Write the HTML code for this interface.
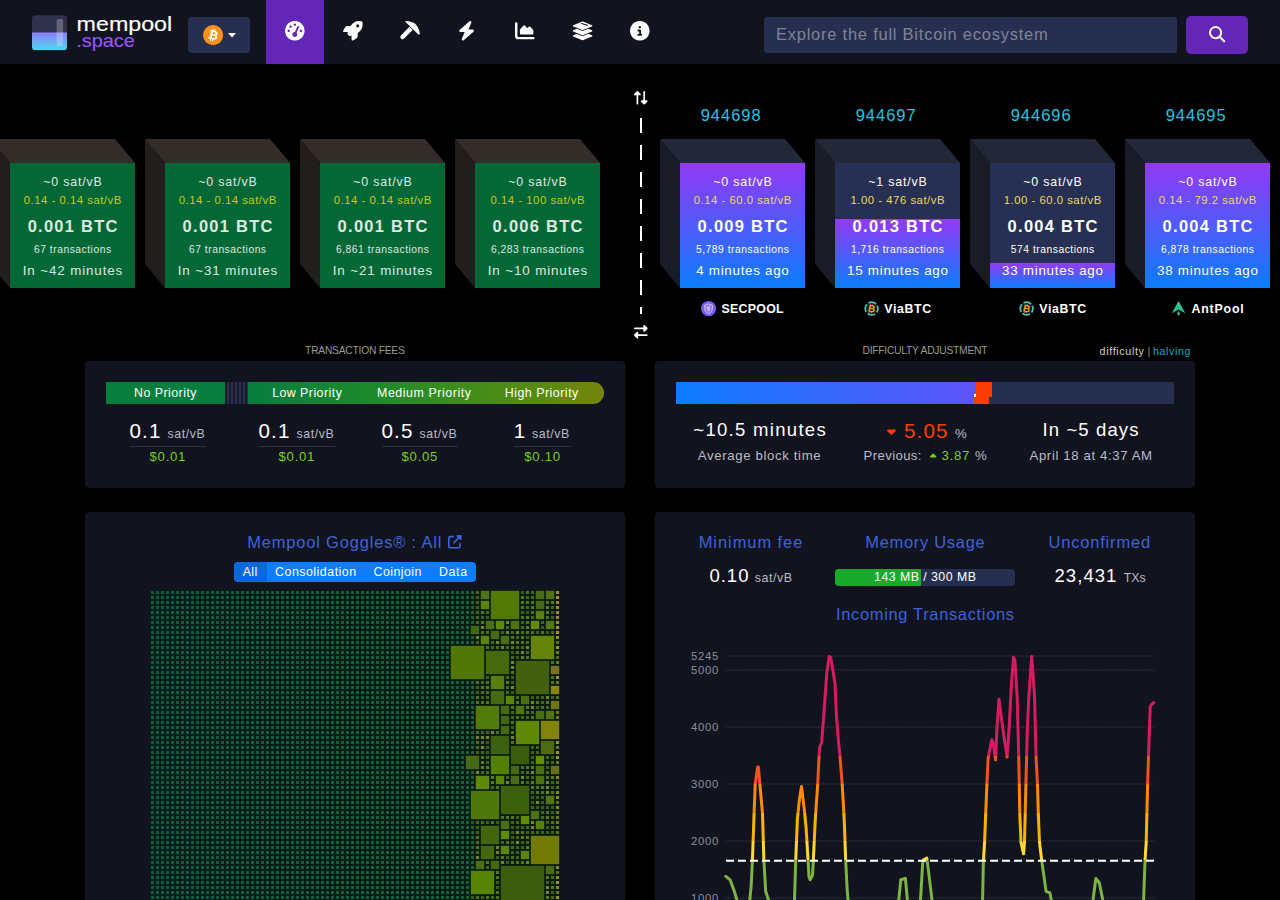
<!DOCTYPE html>
<html lang="en"><head><meta charset="utf-8"><title>mempool - Bitcoin Explorer</title>
<style>
html,body{margin:0;padding:0;background:#000}
body{width:1280px;height:900px;position:relative;overflow:hidden;font-family:"Liberation Sans", sans-serif;color:#fff;font-variant-ligatures:none}
.t{position:absolute;white-space:nowrap;display:block}
.i{position:absolute;display:block;overflow:visible}
.abs,.box,nav,section,header,main,ul,li,a,button,form{position:absolute;display:block;margin:0;padding:0;border:0;list-style:none;box-sizing:border-box}
nav{left:0;top:0;width:1280px;height:64px;background:#11131f}
.box{background:#11131f;border-radius:4px}
.blk{position:absolute;width:125px;height:125px;top:163px}
.blk::after{content:"";position:absolute;width:125px;height:24px;top:-24px;left:-20px;transform:skew(40deg);transform-origin:top}
.blk::before{content:"";position:absolute;width:20px;height:125px;top:-12px;left:-20px;transform:skewY(50deg);transform-origin:top}
.mp{background:#036835}
.mp::after{background:#342c29}
.mp::before{background:#221e1c}
.mb::after{background:#232838}
.mb::before{background:#191c27}
</style></head><body>

<nav>
<svg class="i" style="left:32px;top:15px" width="142" height="37" viewBox="0 0 142 37">
<defs><linearGradient id="lg" x1="0" y1="0" x2="0" y2="1"><stop offset="0" stop-color="#8f7df7"/><stop offset="1" stop-color="#48d9f0"/></linearGradient>
<clipPath id="lc"><rect x="0" y="0.25" width="35" height="35" rx="3.5"/></clipPath></defs>
<g clip-path="url(#lc)"><rect x="0" y="0" width="35" height="17.5" fill="#2e3149"/><rect x="0" y="17.4" width="35" height="18" fill="url(#lg)"/></g>
<rect x="24.6" y="4" width="6.5" height="27.2" rx="1.5" fill="#fff" fill-opacity="0.25"/>
<text x="44.6" y="15.6" font-size="20.4" fill="#fff" textLength="95.6" lengthAdjust="spacingAndGlyphs" stroke="#fff" stroke-width="0.15">mempool</text>
<text x="44.2" y="31.7" font-size="18.5" fill="#9a54f6" textLength="58.6" lengthAdjust="spacingAndGlyphs" stroke="#9a54f6" stroke-width="0.15">.space</text>
</svg>
<button style="left:188px;top:17px;width:62px;height:36px;background:#272f50;border-radius:4px"></button>
<svg class="i" style="left:202.6px;top:24.5px" width="20.2" height="20.2" viewBox="0 0 64 64"><circle cx="32" cy="32" r="32" fill="#f7931a"/>
<path fill="#fff" d="M46.1 27.4c.6-4.3-2.6-6.5-7-8l1.400-5.800-3.500-.9-1.400 5.600c-.9-.2-1.900-.4-2.800-.7l1.400-5.700-3.500-.9-1.400 5.800c-.8-.2-1.500-.3-2.200-.5l-4.800-1.200-.9 3.700s2.600.6 2.500.6c1.400.4 1.700 1.300 1.600 2l-1.600 6.600c.1 0 .2.100.4.100l-.4-.1-2.300 9.200c-.2.400-.6 1.100-1.600.8 0 .1-2.500-.6-2.500-.6l-1.700 4 4.600 1.100c.8.200 1.700.4 2.500.7l-1.400 5.800 3.500.9 1.400-5.800c1 .3 1.900.5 2.800.7l-1.400 5.700 3.500.9 1.400-5.800c6 1.100 10.500.7 12.400-4.700 1.500-4.400-.1-6.900-3.200-8.500 2.300-.5 4-2 4.500-5.100zm-8 11.200c-1.100 4.400-8.400 2-10.800 1.400l1.900-7.700c2.400.6 10 1.800 8.900 6.300zm1.100-11.300c-1 4-7.100 2-9.100 1.500l1.700-7c2 .5 8.400 1.400 7.400 5.500z"/></svg>
<svg class="i" style="left:228px;top:32.6px" width="8" height="4.4" viewBox="0 0 8 4.4"><path d="M0 0H8L4 4.4Z" fill="#fff"/></svg>
<ul style="left:266px;top:0;width:406px;height:64px">
<li style="left:0;top:0;width:58px;height:64px;background:#6326b6"></li>
</ul>
<svg class="i" style="left:285.00px;top:20.70px;" width="19.60" height="19.60" viewBox="0 0 512 512"><path fill="#fff" d="M0 256Q1 186 34 128Q68 70 128 34Q189 0 256 0Q323 0 384 34Q444 70 478 128Q511 186 512 256Q511 326 478 384Q444 442 384 478Q323 512 256 512Q189 512 128 478Q68 442 34 384Q1 326 0 256ZM288 96Q288 82 279 73Q270 64 256 64Q242 64 233 73Q224 82 224 96Q224 110 233 119Q242 128 256 128Q270 128 279 119Q288 110 288 96ZM256 416Q283 415 301 397Q319 379 320 352Q319 325 302 307L366 162Q373 141 354 130Q333 123 322 142L258 288Q257 288 257 288Q256 288 256 288Q229 289 211 307Q193 325 192 352Q193 379 211 397Q229 415 256 416ZM176 144Q176 130 167 121Q158 112 144 112Q130 112 121 121Q112 130 112 144Q112 158 121 167Q130 176 144 176Q158 176 167 167Q176 158 176 144ZM96 288Q110 288 119 279Q128 270 128 256Q128 242 119 233Q110 224 96 224Q82 224 73 233Q64 242 64 256Q64 270 73 279Q82 288 96 288ZM448 256Q448 242 439 233Q430 224 416 224Q402 224 393 233Q384 242 384 256Q384 270 393 279Q402 288 416 288Q430 288 439 279Q448 270 448 256Z"/></svg>
<svg class="i" style="left:343.10px;top:20.70px;" width="19.60" height="19.60" viewBox="0 0 512 512"><path fill="#fff" d="M157 385 126 354 157 385 126 354Q113 340 118 322Q123 308 130 288H24Q10 288 3 276Q-3 264 3 252L56 163Q77 129 118 128H200Q204 122 207 117Q249 57 299 31Q349 5 398 1Q447 -2 484 5Q502 10 507 28Q514 65 511 114Q507 163 481 213Q455 263 395 305Q390 308 384 312V394Q383 435 349 456L260 509Q248 515 236 509Q224 502 224 488V381Q203 388 188 393Q170 398 157 385ZM384 168Q407 167 419 148Q429 128 419 108Q407 89 384 88Q361 89 349 108Q339 128 349 148Q361 167 384 168Z"/></svg>
<svg class="i" style="left:396px;top:16px" width="28" height="28" viewBox="396 16 28 28"><path d="M402.500 37L411.800 27.700" stroke="#fff" stroke-width="4.500" stroke-linecap="round" fill="none"/><path d="M405.500 20.900C409.800 21.200 412.600 22.100 414.500 23.200C416.500 24.700 418.200 27.200 419 29.900C419.500 31.500 419.800 33 419.900 34.300L418.400 34.600L405.300 21.700Z" fill="#fff" stroke="#11131f" stroke-width="1.200" paint-order="stroke" stroke-linejoin="round"/></svg>
<svg class="i" style="left:458.03px;top:20.70px;" width="17.15" height="19.60" viewBox="0 0 448 512"><path fill="#fff" d="M349 45Q358 22 339 6Q318 -7 299 8L43 232Q27 247 34 267Q43 287 64 288H176L99 467Q90 490 109 506Q130 519 149 504L405 280Q421 265 414 245Q406 225 384 224H273L349 45Z"/></svg>
<svg class="i" style="left:514.70px;top:20.70px;" width="19.60" height="19.60" viewBox="0 0 512 512"><path fill="#fff" d="M64 64Q64 50 55 41Q46 32 32 32Q18 32 9 41Q0 50 0 64V400Q1 434 23 457Q46 479 80 480H480Q494 480 503 471Q512 462 512 448Q512 434 503 425Q494 416 480 416H80Q65 415 64 400V64ZM160 352H448H160H448Q462 352 471 343Q480 334 480 320V252Q480 240 472 231L407 154Q397 144 383 143Q370 143 360 152L339 173Q331 181 321 180Q310 180 303 172L264 125Q254 113 240 113Q226 113 215 124L136 215Q128 224 128 236V320Q128 334 137 343Q146 352 160 352Z"/></svg>
<svg class="i" style="left:570px;top:18px" width="26" height="26" viewBox="570 18 26 26"><path d="M573.5 35.9L582.6 32.2L591.7 35.9L582.6 39.6Z" fill="#11131f" stroke="#11131f" stroke-width="2.900" stroke-linejoin="round"/><path d="M573.5 35.9L582.6 32.2L591.7 35.9L582.6 39.6Z" fill="#fff" stroke="#fff" stroke-width="1.300" stroke-linejoin="round"/><path d="M573.5 30.9L582.6 27.2L591.7 30.9L582.6 34.6Z" fill="#11131f" stroke="#11131f" stroke-width="2.900" stroke-linejoin="round"/><path d="M573.5 30.9L582.6 27.2L591.7 30.9L582.6 34.6Z" fill="#fff" stroke="#fff" stroke-width="1.300" stroke-linejoin="round"/><path d="M573.5 25.8L582.6 22.1L591.7 25.8L582.6 29.5Z" fill="#11131f" stroke="#11131f" stroke-width="2.900" stroke-linejoin="round"/><path d="M573.5 25.8L582.6 22.1L591.7 25.8L582.6 29.5Z" fill="#fff" stroke="#fff" stroke-width="1.300" stroke-linejoin="round"/><path d="M581.600 23.500L587.500 25.300" stroke="#11131f" stroke-width="1.100" stroke-linecap="round"/></svg>
<svg class="i" style="left:630.00px;top:20.70px;" width="19.60" height="19.60" viewBox="0 0 512 512"><path fill="#fff" d="M256 512Q326 511 384 478Q442 444 478 384Q512 323 512 256Q512 189 478 128Q442 68 384 34Q326 1 256 0Q186 1 128 34Q70 68 34 128Q0 189 0 256Q0 323 34 384Q70 444 128 478Q186 511 256 512ZM216 336H240H216H240V272H216Q194 270 192 248Q194 226 216 224H264Q286 226 288 248V336H296Q318 338 320 360Q318 382 296 384H216Q194 382 192 360Q194 338 216 336ZM256 128Q270 128 279 137Q288 146 288 160Q288 174 279 183Q270 192 256 192Q242 192 233 183Q224 174 224 160Q224 146 233 137Q242 128 256 128Z"/></svg>
<form style="left:764px;top:17px;width:413px;height:36px;background:#272f50;border-radius:3px"></form>
<span class="t" style="font-size:16.48px;line-height:21px;top:23.60px;color:#7f8394;letter-spacing:0.771px;left:776.00px;">Explore the full Bitcoin ecosystem</span>
<button style="left:1186px;top:16px;width:62px;height:38px;background:#6326b6;border-radius:5px"></button>
<svg class="i" style="left:1208.90px;top:25.70px;" width="16.20" height="16.20" viewBox="0 0 512 512"><path fill="#fff" d="M416 208Q415 278 376 331L503 457Q512 467 512 480Q512 493 503 503Q493 512 480 512Q467 512 457 503L331 376Q278 415 208 416Q120 414 61 355Q2 296 0 208Q2 120 61 61Q120 2 208 0Q296 2 355 61Q414 120 416 208ZM208 352Q247 352 280 333Q313 314 333 280Q352 246 352 208Q352 170 333 136Q313 102 280 83Q247 64 208 64Q169 64 136 83Q103 102 83 136Q64 170 64 208Q64 246 83 280Q103 314 136 333Q169 352 208 352Z"/></svg>
</nav>
<section style="left:0;top:64px;width:1280px;height:280px">
</section>
<div class="blk mp" style="left:10px"></div>
<div class="t" style="font-size:12.36px;line-height:16px;top:173.52px;color:#dfe9e1;letter-spacing:0.814px;left:-127.09px;width:400px;text-align:center;"><span>~0 sat/vB</span></div><div class="t" style="font-size:11.33px;line-height:14px;top:193.18px;color:#c9c816;letter-spacing:0.511px;left:-127.24px;width:400px;text-align:center;"><span>0.14 - 0.14 sat/vB</span></div><div class="t" style="font-size:16.48px;line-height:21px;top:216.00px;color:#dfe9e1;font-weight:700;letter-spacing:1.266px;left:-126.87px;width:400px;text-align:center;"><span>0.001 BTC</span></div><div class="t" style="font-size:10.30px;line-height:13px;top:242.84px;color:#dfe9e1;letter-spacing:0.518px;left:-127.24px;width:400px;text-align:center;"><span>67 transactions</span></div><div class="t" style="font-size:13.39px;line-height:17px;top:262.07px;color:#dfe9e1;letter-spacing:0.878px;left:-127.06px;width:400px;text-align:center;"><span>In ~42 minutes</span></div>
<div class="blk mp" style="left:165px"></div>
<div class="t" style="font-size:12.36px;line-height:16px;top:173.52px;color:#dfe9e1;letter-spacing:0.814px;left:27.91px;width:400px;text-align:center;"><span>~0 sat/vB</span></div><div class="t" style="font-size:11.33px;line-height:14px;top:193.18px;color:#c9c816;letter-spacing:0.511px;left:27.76px;width:400px;text-align:center;"><span>0.14 - 0.14 sat/vB</span></div><div class="t" style="font-size:16.48px;line-height:21px;top:216.00px;color:#dfe9e1;font-weight:700;letter-spacing:1.266px;left:28.13px;width:400px;text-align:center;"><span>0.001 BTC</span></div><div class="t" style="font-size:10.30px;line-height:13px;top:242.84px;color:#dfe9e1;letter-spacing:0.518px;left:27.76px;width:400px;text-align:center;"><span>67 transactions</span></div><div class="t" style="font-size:13.39px;line-height:17px;top:262.07px;color:#dfe9e1;letter-spacing:0.878px;left:27.94px;width:400px;text-align:center;"><span>In ~31 minutes</span></div>
<div class="blk mp" style="left:320px"></div>
<div class="t" style="font-size:12.36px;line-height:16px;top:173.52px;color:#dfe9e1;letter-spacing:0.814px;left:182.91px;width:400px;text-align:center;"><span>~0 sat/vB</span></div><div class="t" style="font-size:11.33px;line-height:14px;top:193.18px;color:#c9c816;letter-spacing:0.511px;left:182.76px;width:400px;text-align:center;"><span>0.14 - 0.14 sat/vB</span></div><div class="t" style="font-size:16.48px;line-height:21px;top:216.00px;color:#dfe9e1;font-weight:700;letter-spacing:1.266px;left:183.13px;width:400px;text-align:center;"><span>0.001 BTC</span></div><div class="t" style="font-size:10.30px;line-height:13px;top:242.84px;color:#dfe9e1;letter-spacing:0.520px;left:182.76px;width:400px;text-align:center;"><span>6,861 transactions</span></div><div class="t" style="font-size:13.39px;line-height:17px;top:262.07px;color:#dfe9e1;letter-spacing:0.878px;left:182.94px;width:400px;text-align:center;"><span>In ~21 minutes</span></div>
<div class="blk mp" style="left:475px"></div>
<div class="t" style="font-size:12.36px;line-height:16px;top:173.52px;color:#dfe9e1;letter-spacing:0.814px;left:337.91px;width:400px;text-align:center;"><span>~0 sat/vB</span></div><div class="t" style="font-size:11.33px;line-height:14px;top:193.18px;color:#c9c816;letter-spacing:0.520px;left:337.76px;width:400px;text-align:center;"><span>0.14 - 100 sat/vB</span></div><div class="t" style="font-size:16.48px;line-height:21px;top:216.00px;color:#dfe9e1;font-weight:700;letter-spacing:1.266px;left:338.13px;width:400px;text-align:center;"><span>0.006 BTC</span></div><div class="t" style="font-size:10.30px;line-height:13px;top:242.84px;color:#dfe9e1;letter-spacing:0.520px;left:337.76px;width:400px;text-align:center;"><span>6,283 transactions</span></div><div class="t" style="font-size:13.39px;line-height:17px;top:262.07px;color:#dfe9e1;letter-spacing:0.878px;left:337.94px;width:400px;text-align:center;"><span>In ~10 minutes</span></div>
<div class="abs" style="left:640px;top:117.5px;width:2px;height:196px;background:repeating-linear-gradient(to bottom,#fff 0,#fff 15px,transparent 15px,transparent 27px)"></div>
<svg class="i" style="left:634.40px;top:90.80px;" width="13.60" height="13.60" viewBox="0 0 512 512"><path fill="#fff" d="M32 96H352H32H352V32Q353 11 372 2Q391 -5 407 9L503 105Q512 115 512 128Q512 141 503 151L407 247Q391 261 372 253Q353 245 352 224V160H32Q18 160 9 151Q0 142 0 128Q0 114 9 105Q18 96 32 96ZM480 352Q494 352 503 361Q512 370 512 384Q512 398 503 407Q494 416 480 416H160V480Q159 501 140 510Q121 517 105 503L9 407Q0 397 0 384Q0 371 9 362L105 266Q121 251 140 259Q159 267 160 288V352H480Z" transform="rotate(90 256 256)"/></svg>
<svg class="i" style="left:634.40px;top:324.80px;" width="13.60" height="13.60" viewBox="0 0 512 512"><path fill="#fff" d="M32 96H352H32H352V32Q353 11 372 2Q391 -5 407 9L503 105Q512 115 512 128Q512 141 503 151L407 247Q391 261 372 253Q353 245 352 224V160H32Q18 160 9 151Q0 142 0 128Q0 114 9 105Q18 96 32 96ZM480 352Q494 352 503 361Q512 370 512 384Q512 398 503 407Q494 416 480 416H160V480Q159 501 140 510Q121 517 105 503L9 407Q0 397 0 384Q0 371 9 362L105 266Q121 251 140 259Q159 267 160 288V352H480Z"/></svg>
<div class="blk mb" style="left:680px;background:linear-gradient(to bottom,#272f52 0,#272f52 0%,#9339f4 0%,#0c7cff 100%)"></div>
<div class="t" style="font-size:16.48px;line-height:21px;top:104.90px;color:#1fc4e6;letter-spacing:1.018px;left:531.21px;width:400px;text-align:center;"><span>944698</span></div>
<div class="t" style="font-size:12.36px;line-height:16px;top:173.52px;color:#fff;letter-spacing:0.814px;left:542.91px;width:400px;text-align:center;"><span>~0 sat/vB</span></div><div class="t" style="font-size:11.33px;line-height:14px;top:193.18px;color:#eadb5c;letter-spacing:0.511px;left:542.76px;width:400px;text-align:center;"><span>0.14 - 60.0 sat/vB</span></div><div class="t" style="font-size:16.48px;line-height:21px;top:216.00px;color:#fff;font-weight:700;letter-spacing:1.266px;left:543.13px;width:400px;text-align:center;"><span>0.009 BTC</span></div><div class="t" style="font-size:10.30px;line-height:13px;top:242.84px;color:#fff;letter-spacing:0.520px;left:542.76px;width:400px;text-align:center;"><span>5,789 transactions</span></div><div class="t" style="font-size:13.39px;line-height:17px;top:262.07px;color:#fff;letter-spacing:0.716px;left:542.86px;width:400px;text-align:center;"><span>4 minutes ago</span></div>
<div class="blk mb" style="left:835px;background:linear-gradient(to bottom,#272f52 0,#272f52 45%,#9339f4 45%,#0c7cff 100%)"></div>
<div class="t" style="font-size:16.48px;line-height:21px;top:104.90px;color:#1fc4e6;letter-spacing:1.018px;left:686.21px;width:400px;text-align:center;"><span>944697</span></div>
<div class="t" style="font-size:12.36px;line-height:16px;top:173.52px;color:#fff;letter-spacing:0.814px;left:697.91px;width:400px;text-align:center;"><span>~1 sat/vB</span></div><div class="t" style="font-size:11.33px;line-height:14px;top:193.18px;color:#eadb5c;letter-spacing:0.520px;left:697.76px;width:400px;text-align:center;"><span>1.00 - 476 sat/vB</span></div><div class="t" style="font-size:16.48px;line-height:21px;top:216.00px;color:#fff;font-weight:700;letter-spacing:1.266px;left:698.13px;width:400px;text-align:center;"><span>0.013 BTC</span></div><div class="t" style="font-size:10.30px;line-height:13px;top:242.84px;color:#fff;letter-spacing:0.520px;left:697.76px;width:400px;text-align:center;"><span>1,716 transactions</span></div><div class="t" style="font-size:13.39px;line-height:17px;top:262.07px;color:#fff;letter-spacing:0.724px;left:697.86px;width:400px;text-align:center;"><span>15 minutes ago</span></div>
<div class="blk mb" style="left:990px;background:linear-gradient(to bottom,#272f52 0,#272f52 80%,#9339f4 80%,#0c7cff 100%)"></div>
<div class="t" style="font-size:16.48px;line-height:21px;top:104.90px;color:#1fc4e6;letter-spacing:1.018px;left:841.21px;width:400px;text-align:center;"><span>944696</span></div>
<div class="t" style="font-size:12.36px;line-height:16px;top:173.52px;color:#fff;letter-spacing:0.814px;left:852.91px;width:400px;text-align:center;"><span>~0 sat/vB</span></div><div class="t" style="font-size:11.33px;line-height:14px;top:193.18px;color:#eadb5c;letter-spacing:0.511px;left:852.76px;width:400px;text-align:center;"><span>1.00 - 60.0 sat/vB</span></div><div class="t" style="font-size:16.48px;line-height:21px;top:216.00px;color:#fff;font-weight:700;letter-spacing:1.266px;left:853.13px;width:400px;text-align:center;"><span>0.004 BTC</span></div><div class="t" style="font-size:10.30px;line-height:13px;top:242.84px;color:#fff;letter-spacing:0.525px;left:852.76px;width:400px;text-align:center;"><span>574 transactions</span></div><div class="t" style="font-size:13.39px;line-height:17px;top:262.07px;color:#fff;letter-spacing:0.724px;left:852.86px;width:400px;text-align:center;"><span>33 minutes ago</span></div>
<div class="blk mb" style="left:1145px;background:linear-gradient(to bottom,#272f52 0,#272f52 0%,#9339f4 0%,#0c7cff 100%)"></div>
<div class="t" style="font-size:16.48px;line-height:21px;top:104.90px;color:#1fc4e6;letter-spacing:1.018px;left:996.21px;width:400px;text-align:center;"><span>944695</span></div>
<div class="t" style="font-size:12.36px;line-height:16px;top:173.52px;color:#fff;letter-spacing:0.814px;left:1007.91px;width:400px;text-align:center;"><span>~0 sat/vB</span></div><div class="t" style="font-size:11.33px;line-height:14px;top:193.18px;color:#eadb5c;letter-spacing:0.511px;left:1007.76px;width:400px;text-align:center;"><span>0.14 - 79.2 sat/vB</span></div><div class="t" style="font-size:16.48px;line-height:21px;top:216.00px;color:#fff;font-weight:700;letter-spacing:1.266px;left:1008.13px;width:400px;text-align:center;"><span>0.004 BTC</span></div><div class="t" style="font-size:10.30px;line-height:13px;top:242.84px;color:#fff;letter-spacing:0.520px;left:1007.76px;width:400px;text-align:center;"><span>6,878 transactions</span></div><div class="t" style="font-size:13.39px;line-height:17px;top:262.07px;color:#fff;letter-spacing:0.724px;left:1007.86px;width:400px;text-align:center;"><span>38 minutes ago</span></div>
<svg class="i" style="left:700.80px;top:300.8px" width="15.2" height="15.2" viewBox="0 0 15 15"><circle cx="7.5" cy="7.5" r="7.5" fill="#7b5bf2"/><path d="M7.500 2.700L11.300 4.100V7.600C11.300 10 9.700 11.700 7.500 12.600C5.300 11.700 3.700 10 3.700 7.600V4.100Z" fill="#8f74f6" stroke="#d6caff" stroke-width="0.900" stroke-linejoin="round"/><path d="M9 5.900H6.600Q6 5.900 6 6.600Q6 7.400 6.600 7.400H8.400Q9 7.400 9 8.200Q9 9 8.400 9H6" fill="none" stroke="#e4dcff" stroke-width="0.900"/></svg><span class="t" style="font-size:12.36px;line-height:16px;top:300.52px;color:#fff;font-weight:700;letter-spacing:0.295px;left:721.40px;">SECPOOL</span>
<svg class="i" style="left:863.80px;top:300.8px" width="15.2" height="15.2" viewBox="0 0 15 15"><circle cx="7.500" cy="7.500" r="6.300" fill="#0c1a1e" stroke="#4fc0b2" stroke-width="1.700" stroke-dasharray="8.100 1.800" stroke-dashoffset="4"/><text x="7.700" y="11" font-size="9.800" font-weight="700" text-anchor="middle" fill="#f2a01e" transform="rotate(12 7.500 7.500)">B</text><path d="M6.600 3.200V4.400M8.400 3.500V4.600M5.700 10.600V11.800M7.500 10.900V12.100" stroke="#f2a01e" stroke-width="0.800"/></svg><span class="t" style="font-size:12.36px;line-height:16px;top:300.52px;color:#fff;font-weight:700;letter-spacing:0.617px;left:884.30px;">ViaBTC</span>
<svg class="i" style="left:1018.80px;top:300.8px" width="15.2" height="15.2" viewBox="0 0 15 15"><circle cx="7.500" cy="7.500" r="6.300" fill="#0c1a1e" stroke="#4fc0b2" stroke-width="1.700" stroke-dasharray="8.100 1.800" stroke-dashoffset="4"/><text x="7.700" y="11" font-size="9.800" font-weight="700" text-anchor="middle" fill="#f2a01e" transform="rotate(12 7.500 7.500)">B</text><path d="M6.600 3.200V4.400M8.400 3.500V4.600M5.700 10.600V11.800M7.500 10.900V12.100" stroke="#f2a01e" stroke-width="0.800"/></svg><span class="t" style="font-size:12.36px;line-height:16px;top:300.52px;color:#fff;font-weight:700;letter-spacing:0.617px;left:1039.30px;">ViaBTC</span>
<svg class="i" style="left:1170.90px;top:300.8px" width="15.2" height="15.2" viewBox="0 0 15 15"><path d="M7.500 0L14.200 12L7.500 8.500L0.800 12Z" fill="#2fc18a"/><path d="M7.500 9.800L9 12.400L7.500 14.800L6 12.400Z" fill="#2fc18a"/></svg><span class="t" style="font-size:12.36px;line-height:16px;top:300.52px;color:#fff;font-weight:700;letter-spacing:0.799px;left:1191.50px;">AntPool</span>
<div class="t" style="font-size:10.30px;line-height:13px;top:343.94px;color:#999;letter-spacing:-0.255px;left:154.87px;width:400px;text-align:center;"><span>TRANSACTION FEES</span></div>
<section class="box" style="left:85px;top:361px;width:540px;height:127px">
<div class="abs" style="left:21px;top:21px;width:119px;height:22px;background:#077d3e"></div>
<div class="abs" style="left:140px;top:21px;width:23px;height:22px;background:repeating-linear-gradient(90deg,#181b2d 0,#181b2d 2px,#2a2f4a 2px,#2a2f4a 4px)"></div>
<div class="abs" style="left:162.5px;top:21px;width:356.5px;height:22px;border-radius:0 11px 11px 0;background:linear-gradient(90deg,#077d3e 0%,#1d8a2c 35%,#3e8d1a 60%,#5d8a0e 85%,#76840a 100%)"></div>
</section>
<div class="t" style="font-size:12.36px;line-height:16px;top:385.02px;color:#fff;letter-spacing:0.469px;left:-34.47px;width:400px;text-align:center;"><span>No Priority</span></div>
<div class="t" style="font-size:12.36px;line-height:16px;top:385.02px;color:#fff;letter-spacing:0.466px;left:107.23px;width:400px;text-align:center;"><span>Low Priority</span></div>
<div class="t" style="font-size:12.36px;line-height:16px;top:385.02px;color:#fff;letter-spacing:0.577px;left:224.29px;width:400px;text-align:center;"><span>Medium Priority</span></div>
<div class="t" style="font-size:12.36px;line-height:16px;top:385.02px;color:#fff;letter-spacing:0.523px;left:341.76px;width:400px;text-align:center;"><span>High Priority</span></div>
<span class="t" style="font-size:20.60px;line-height:26px;top:418.07px;color:#fff;letter-spacing:1.057px;left:129.60px;">0.1</span>
<span class="t" style="font-size:12.36px;line-height:16px;top:425.92px;color:#b9bcc8;letter-spacing:0.555px;left:167.60px;">sat/vB</span>
<div class="abs" style="left:129.5px;top:446px;width:76.0px;height:1px;background:#2c3044"></div>
<div class="t" style="font-size:13.18px;line-height:17px;top:447.94px;color:#75d11f;letter-spacing:0.734px;left:-32.13px;width:400px;text-align:center;"><span>$0.01</span></div>
<span class="t" style="font-size:20.60px;line-height:26px;top:418.07px;color:#fff;letter-spacing:1.057px;left:258.60px;">0.1</span>
<span class="t" style="font-size:12.36px;line-height:16px;top:425.92px;color:#b9bcc8;letter-spacing:0.555px;left:296.60px;">sat/vB</span>
<div class="abs" style="left:258.5px;top:446px;width:76.0px;height:1px;background:#2c3044"></div>
<div class="t" style="font-size:13.18px;line-height:17px;top:447.94px;color:#75d11f;letter-spacing:0.734px;left:96.87px;width:400px;text-align:center;"><span>$0.01</span></div>
<span class="t" style="font-size:20.60px;line-height:26px;top:418.07px;color:#fff;letter-spacing:1.057px;left:381.60px;">0.5</span>
<span class="t" style="font-size:12.36px;line-height:16px;top:425.92px;color:#b9bcc8;letter-spacing:0.555px;left:419.60px;">sat/vB</span>
<div class="abs" style="left:381.5px;top:446px;width:76.0px;height:1px;background:#2c3044"></div>
<div class="t" style="font-size:13.18px;line-height:17px;top:447.94px;color:#75d11f;letter-spacing:0.734px;left:219.87px;width:400px;text-align:center;"><span>$0.05</span></div>
<span class="t" style="font-size:20.60px;line-height:26px;top:418.07px;color:#fff;letter-spacing:1.266px;left:513.80px;">1</span>
<span class="t" style="font-size:12.36px;line-height:16px;top:425.92px;color:#b9bcc8;letter-spacing:0.555px;left:532.00px;">sat/vB</span>
<div class="abs" style="left:513.5px;top:446px;width:57.5px;height:1px;background:#2c3044"></div>
<div class="t" style="font-size:13.18px;line-height:17px;top:447.94px;color:#75d11f;letter-spacing:0.734px;left:342.62px;width:400px;text-align:center;"><span>$0.10</span></div>
<div class="t" style="font-size:10.30px;line-height:13px;top:343.94px;color:#999;letter-spacing:-0.251px;left:724.87px;width:400px;text-align:center;"><span>DIFFICULTY ADJUSTMENT</span></div>
<span class="t" style="font-size:10.71px;line-height:14px;top:344.29px;color:#d0d0d0;letter-spacing:0.645px;left:1099.60px;">difficulty</span>
<span class="t" style="font-size:10.71px;line-height:14px;top:344.29px;color:#8a8a8a;letter-spacing:0.734px;left:1147.60px;">|</span>
<span class="t" style="font-size:10.71px;line-height:14px;top:344.29px;color:#1ba5c6;letter-spacing:0.592px;left:1153.00px;">halving</span>
<section class="box" style="left:655px;top:361px;width:540px;height:127px">
<div class="abs" style="left:21px;top:21px;width:498px;height:22px;background:#272f50"></div>
<div class="abs" style="left:21px;top:21px;width:300px;height:22px;background:linear-gradient(90deg,#0c7cff 0,#9339f4 498px)"></div>
<div class="abs" style="left:321px;top:21px;width:16px;height:15px;background:#ff3d00"></div>
<div class="abs" style="left:319px;top:35px;width:15px;height:8px;background:#ff3d00"></div>
<div class="abs" style="left:319px;top:32.800px;width:2px;height:3px;background:#fff"></div>
</section>
<div class="t" style="font-size:18.54px;line-height:23px;top:418.39px;color:#fff;letter-spacing:1.293px;left:560.15px;width:400px;text-align:center;"><span>~10.5 minutes</span></div>
<div class="t" style="font-size:13.18px;line-height:17px;top:446.64px;color:#b9bcc8;letter-spacing:0.655px;left:559.53px;width:400px;text-align:center;"><span>Average block time</span></div>
<div class="t" style="font-size:18.54px;line-height:23px;top:418.39px;color:#fff;letter-spacing:1.116px;left:891.06px;width:400px;text-align:center;"><span>In ~5 days</span></div>
<div class="t" style="font-size:13.18px;line-height:17px;top:446.64px;color:#b9bcc8;letter-spacing:0.627px;left:891.11px;width:400px;text-align:center;"><span>April 18 at 4:37 AM</span></div>
<svg class="i" style="left:887.00px;top:424.00px;" width="9.00" height="14.40" viewBox="0 0 320 512"><path fill="#ff3d00" d="M137 375Q147 384 160 384Q173 384 183 375L311 247Q325 231 318 212Q309 193 288 192H32Q11 193 2 212Q-5 231 9 247L137 375Z"/></svg>
<span class="t" style="font-size:20.60px;line-height:26px;top:417.87px;color:#ff3d00;letter-spacing:1.109px;left:904.00px;">5.05</span>
<span class="t" style="font-size:13.18px;line-height:17px;top:424.94px;color:#b9bcc8;letter-spacing:0.453px;left:955.00px;">%</span>
<span class="t" style="font-size:13.18px;line-height:17px;top:446.64px;color:#b9bcc8;letter-spacing:0.387px;left:863.50px;">Previous:</span>
<svg class="i" style="left:930.08px;top:451.45px;" width="6.44" height="10.30" viewBox="0 0 320 512"><path fill="#75d11f" d="M183 137Q173 128 160 128Q147 128 137 137L9 265Q-5 281 2 300Q11 319 32 320H288Q309 319 318 300Q325 281 311 265L183 137Z"/></svg>
<span class="t" style="font-size:13.18px;line-height:17px;top:446.64px;color:#75d11f;letter-spacing:0.715px;left:941.50px;">3.87</span>
<span class="t" style="font-size:13.18px;line-height:17px;top:446.64px;color:#b9bcc8;letter-spacing:0.453px;left:975.00px;">%</span>
<section class="box" style="left:85px;top:512px;width:540px;height:400px">
</section>
<div class="t" style="font-size:16.48px;line-height:21px;top:531.60px;color:#3d63da;letter-spacing:0.824px;left:144.71px;width:400px;text-align:center;"><span>Mempool Goggles® : All</span></div>
<svg class="i" style="left:448.40px;top:534.60px;" width="13.60" height="13.60" viewBox="0 0 512 512"><path fill="#3d63da" d="M352 0Q331 1 322 20Q315 39 329 55L371 96L201 265Q192 275 192 288Q192 301 201 311Q211 320 224 320Q237 320 247 311L416 141L457 183Q473 197 492 190Q511 181 512 160V32Q512 18 503 9Q494 0 480 0H352ZM80 32Q46 33 23 55Q1 78 0 112V432Q1 466 23 489Q46 511 80 512H400Q434 511 457 489Q479 466 480 432V320Q480 306 471 297Q462 288 448 288Q434 288 425 297Q416 306 416 320V432Q415 447 400 448H80Q65 447 64 432V112Q65 97 80 96H192Q206 96 215 87Q224 78 224 64Q224 50 215 41Q206 32 192 32H80Z"/></svg>
<div class="abs" style="left:234px;top:562px;width:242px;height:20px;background:#0d7cff;border-radius:4px"></div>
<div class="abs" style="left:234px;top:562px;width:33px;height:20px;background:#0a68df;border-radius:4px 0 0 4px"></div>
<div class="t" style="font-size:12.36px;line-height:16px;top:563.52px;color:#fff;letter-spacing:0.380px;left:50.19px;width:400px;text-align:center;"><span>All</span></div>
<div class="t" style="font-size:12.36px;line-height:16px;top:563.52px;color:#fff;letter-spacing:0.511px;left:115.86px;width:400px;text-align:center;"><span>Consolidation</span></div>
<div class="t" style="font-size:12.36px;line-height:16px;top:563.52px;color:#fff;letter-spacing:0.451px;left:197.73px;width:400px;text-align:center;"><span>Coinjoin</span></div>
<div class="t" style="font-size:12.36px;line-height:16px;top:563.52px;color:#fff;letter-spacing:0.637px;left:253.32px;width:400px;text-align:center;"><span>Data</span></div>
<svg class="i" style="left:150px;top:590px" width="410" height="310" viewBox="0 0 410 310" shape-rendering="auto"><defs><pattern id="tp" width="5" height="5" patternUnits="userSpaceOnUse"><rect width="5" height="5" fill="#021c12"/><rect x="1.1" y="1.1" width="2.800" height="2.800" fill="#146a45"/></pattern><linearGradient id="tg" x1="0" y1="0" x2="1" y2="0"><stop offset="0" stop-color="#0a2a40" stop-opacity="0.16"/><stop offset="0.5" stop-color="#0a2a40" stop-opacity="0.06"/><stop offset="1" stop-color="#0a2a40" stop-opacity="0"/></linearGradient></defs><rect width="410" height="310" fill="#031a0c"/><path d="M0 0H325V5H0ZM0 5H325V10H0ZM0 10H325V15H0ZM0 15H325V20H0ZM0 20H325V25H0ZM0 25H325V30H0ZM0 30H325V35H0ZM0 35H320V40H0ZM0 40H320V45H0ZM0 45H325V50H0ZM0 50H325V55H0ZM0 55H300V60H0ZM0 60H300V65H0ZM0 65H300V70H0ZM0 70H300V75H0ZM0 75H300V80H0ZM0 80H300V85H0ZM0 85H300V90H0ZM0 90H325V95H0ZM0 95H325V100H0ZM0 100H325V105H0ZM0 105H325V110H0ZM0 110H325V115H0ZM0 115H325V120H0ZM0 120H325V125H0ZM0 125H325V130H0ZM0 130H325V135H0ZM0 135H325V140H0ZM0 140H325V145H0ZM0 145H325V150H0ZM0 150H325V155H0ZM0 155H325V160H0ZM0 160H325V165H0ZM0 165H315V170H0ZM0 170H315V175H0ZM0 175H315V180H0ZM0 180H325V185H0ZM0 185H325V190H0ZM0 190H325V195H0ZM0 195H325V200H0ZM0 200H320V205H0ZM0 205H320V210H0ZM0 210H320V215H0ZM0 215H320V220H0ZM0 220H320V225H0ZM0 225H320V230H0ZM0 230H325V235H0ZM0 235H325V240H0ZM0 240H325V245H0ZM0 245H325V250H0ZM0 250H325V255H0ZM0 255H325V260H0ZM0 260H325V265H0ZM0 265H325V270H0ZM0 270H325V275H0ZM0 275H325V280H0ZM0 280H320V285H0ZM0 285H320V290H0ZM0 290H320V295H0ZM0 295H320V300H0ZM0 300H320V305H0ZM0 305H320V310H0Z" fill="url(#tp)"/><rect width="330" height="310" fill="url(#tg)"/><path d="M325.9 0.9h3.2v3.2h-3.2zM380.9 0.9h3.2v3.2h-3.2zM375.9 5.9h3.2v3.2h-3.2zM380.9 5.9h3.2v3.2h-3.2zM325.9 10.9h3.2v3.2h-3.2zM375.9 15.9h3.2v3.2h-3.2zM400.9 15.9h3.2v3.2h-3.2zM325.9 20.9h3.2v3.2h-3.2zM335.9 20.9h3.2v3.2h-3.2zM380.9 25.9h3.2v3.2h-3.2zM325.9 30.9h3.2v3.2h-3.2zM390.9 30.9h3.2v3.2h-3.2zM355.9 35.9h3.2v3.2h-3.2zM360.9 40.9h3.2v3.2h-3.2zM400.9 40.9h3.2v3.2h-3.2zM365.9 45.9h3.2v3.2h-3.2zM325.9 50.9h3.2v3.2h-3.2zM340.9 50.9h3.2v3.2h-3.2zM340.9 55.9h3.2v3.2h-3.2zM365.9 55.9h3.2v3.2h-3.2zM370.9 55.9h3.2v3.2h-3.2zM375.9 60.9h3.2v3.2h-3.2zM330.9 90.9h3.2v3.2h-3.2zM355.9 95.9h3.2v3.2h-3.2zM355.9 100.9h3.2v3.2h-3.2zM335.9 105.9h3.2v3.2h-3.2zM365.9 105.9h3.2v3.2h-3.2zM390.9 105.9h3.2v3.2h-3.2zM390.9 110.9h3.2v3.2h-3.2zM395.9 115.9h3.2v3.2h-3.2zM360.9 120.9h3.2v3.2h-3.2zM380.9 120.9h3.2v3.2h-3.2zM370.9 125.9h3.2v3.2h-3.2zM375.9 125.9h3.2v3.2h-3.2zM330.9 140.9h3.2v3.2h-3.2zM335.9 140.9h3.2v3.2h-3.2zM385.9 155.9h3.2v3.2h-3.2zM330.9 160.9h3.2v3.2h-3.2zM385.9 160.9h3.2v3.2h-3.2zM395.9 165.9h3.2v3.2h-3.2zM400.9 170.9h3.2v3.2h-3.2zM330.9 180.9h3.2v3.2h-3.2zM335.9 180.9h3.2v3.2h-3.2zM370.9 180.9h3.2v3.2h-3.2zM355.9 185.9h3.2v3.2h-3.2zM375.9 185.9h3.2v3.2h-3.2zM380.9 185.9h3.2v3.2h-3.2zM375.9 190.9h3.2v3.2h-3.2zM400.9 190.9h3.2v3.2h-3.2zM340.9 195.9h3.2v3.2h-3.2zM380.9 200.9h3.2v3.2h-3.2zM380.9 215.9h3.2v3.2h-3.2zM390.9 220.9h3.2v3.2h-3.2zM365.9 225.9h3.2v3.2h-3.2zM325.9 230.9h3.2v3.2h-3.2zM360.9 230.9h3.2v3.2h-3.2zM365.9 230.9h3.2v3.2h-3.2zM375.9 235.9h3.2v3.2h-3.2zM400.9 235.9h3.2v3.2h-3.2zM380.9 240.9h3.2v3.2h-3.2zM385.9 240.9h3.2v3.2h-3.2zM365.9 245.9h3.2v3.2h-3.2zM350.9 250.9h3.2v3.2h-3.2zM375.9 250.9h3.2v3.2h-3.2zM360.9 255.9h3.2v3.2h-3.2zM335.9 275.9h3.2v3.2h-3.2zM395.9 290.9h3.2v3.2h-3.2zM340.9 305.9h3.2v3.2h-3.2zM400.9 305.9h3.2v3.2h-3.2z" fill="rgb(72,100,25)"/><path d="M370.9 0.9h3.2v3.2h-3.2zM375.9 20.9h3.2v3.2h-3.2zM400.9 20.9h3.2v3.2h-3.2zM335.9 25.9h3.2v3.2h-3.2zM390.9 35.9h3.2v3.2h-3.2zM395.9 40.9h3.2v3.2h-3.2zM360.9 60.9h3.2v3.2h-3.2zM365.9 65.9h3.2v3.2h-3.2zM360.9 85.9h3.2v3.2h-3.2zM360.9 90.9h3.2v3.2h-3.2zM325.9 95.9h3.2v3.2h-3.2zM325.9 100.9h3.2v3.2h-3.2zM360.9 100.9h3.2v3.2h-3.2zM380.9 105.9h3.2v3.2h-3.2zM385.9 115.9h3.2v3.2h-3.2zM360.9 135.9h3.2v3.2h-3.2zM335.9 150.9h3.2v3.2h-3.2zM335.9 155.9h3.2v3.2h-3.2zM335.9 160.9h3.2v3.2h-3.2zM400.9 165.9h3.2v3.2h-3.2zM400.9 195.9h3.2v3.2h-3.2zM380.9 205.9h3.2v3.2h-3.2zM385.9 205.9h3.2v3.2h-3.2zM390.9 205.9h3.2v3.2h-3.2zM380.9 210.9h3.2v3.2h-3.2zM390.9 210.9h3.2v3.2h-3.2zM385.9 215.9h3.2v3.2h-3.2zM400.9 215.9h3.2v3.2h-3.2zM345.9 230.9h3.2v3.2h-3.2zM360.9 235.9h3.2v3.2h-3.2zM395.9 235.9h3.2v3.2h-3.2zM325.9 240.9h3.2v3.2h-3.2zM360.9 240.9h3.2v3.2h-3.2zM355.9 270.9h3.2v3.2h-3.2zM345.9 290.9h3.2v3.2h-3.2zM400.9 290.9h3.2v3.2h-3.2zM345.9 295.9h3.2v3.2h-3.2zM400.9 300.9h3.2v3.2h-3.2zM320.9 305.9h3.2v3.2h-3.2z" fill="rgb(61,90,25)"/><path d="M375.9 0.9h3.2v3.2h-3.2zM370.9 5.9h3.2v3.2h-3.2zM370.9 10.9h3.2v3.2h-3.2zM375.9 10.9h3.2v3.2h-3.2zM380.9 10.9h3.2v3.2h-3.2zM395.9 10.9h3.2v3.2h-3.2zM370.9 15.9h3.2v3.2h-3.2zM380.9 15.9h3.2v3.2h-3.2zM395.9 20.9h3.2v3.2h-3.2zM370.9 25.9h3.2v3.2h-3.2zM395.9 25.9h3.2v3.2h-3.2zM375.9 30.9h3.2v3.2h-3.2zM330.9 40.9h3.2v3.2h-3.2zM375.9 40.9h3.2v3.2h-3.2zM380.9 40.9h3.2v3.2h-3.2zM390.9 40.9h3.2v3.2h-3.2zM360.9 45.9h3.2v3.2h-3.2zM370.9 45.9h3.2v3.2h-3.2zM365.9 50.9h3.2v3.2h-3.2zM370.9 50.9h3.2v3.2h-3.2zM335.9 55.9h3.2v3.2h-3.2zM360.9 55.9h3.2v3.2h-3.2zM365.9 60.9h3.2v3.2h-3.2zM375.9 65.9h3.2v3.2h-3.2zM400.9 70.9h3.2v3.2h-3.2zM360.9 80.9h3.2v3.2h-3.2zM400.9 85.9h3.2v3.2h-3.2zM325.9 90.9h3.2v3.2h-3.2zM335.9 90.9h3.2v3.2h-3.2zM400.9 90.9h3.2v3.2h-3.2zM325.9 105.9h3.2v3.2h-3.2zM325.9 110.9h3.2v3.2h-3.2zM330.9 110.9h3.2v3.2h-3.2zM335.9 110.9h3.2v3.2h-3.2zM365.9 110.9h3.2v3.2h-3.2zM385.9 110.9h3.2v3.2h-3.2zM360.9 115.9h3.2v3.2h-3.2zM390.9 115.9h3.2v3.2h-3.2zM375.9 120.9h3.2v3.2h-3.2zM365.9 125.9h3.2v3.2h-3.2zM380.9 125.9h3.2v3.2h-3.2zM360.9 130.9h3.2v3.2h-3.2zM345.9 140.9h3.2v3.2h-3.2zM360.9 140.9h3.2v3.2h-3.2zM330.9 150.9h3.2v3.2h-3.2zM360.9 150.9h3.2v3.2h-3.2zM330.9 165.9h3.2v3.2h-3.2zM370.9 175.9h3.2v3.2h-3.2zM395.9 185.9h3.2v3.2h-3.2zM345.9 195.9h3.2v3.2h-3.2zM380.9 195.9h3.2v3.2h-3.2zM385.9 195.9h3.2v3.2h-3.2zM385.9 200.9h3.2v3.2h-3.2zM390.9 200.9h3.2v3.2h-3.2zM400.9 200.9h3.2v3.2h-3.2zM395.9 220.9h3.2v3.2h-3.2zM350.9 225.9h3.2v3.2h-3.2zM340.9 230.9h3.2v3.2h-3.2zM400.9 230.9h3.2v3.2h-3.2zM370.9 240.9h3.2v3.2h-3.2zM325.9 245.9h3.2v3.2h-3.2zM355.9 250.9h3.2v3.2h-3.2zM325.9 255.9h3.2v3.2h-3.2zM360.9 270.9h3.2v3.2h-3.2zM365.9 270.9h3.2v3.2h-3.2zM370.9 270.9h3.2v3.2h-3.2zM345.9 285.9h3.2v3.2h-3.2zM345.9 300.9h3.2v3.2h-3.2zM325.9 305.9h3.2v3.2h-3.2zM335.9 305.9h3.2v3.2h-3.2zM345.9 305.9h3.2v3.2h-3.2z" fill="rgb(85,112,27)"/><path d="M405.9 0.9h3.2v3.2h-3.2zM405.9 10.9h3.2v3.2h-3.2zM405.9 20.9h3.2v3.2h-3.2zM405.9 25.9h3.2v3.2h-3.2z" fill="rgb(171,126,54)"/><path d="M325.9 5.9h3.2v3.2h-3.2zM325.9 15.9h3.2v3.2h-3.2zM370.9 20.9h3.2v3.2h-3.2zM330.9 25.9h3.2v3.2h-3.2zM400.9 25.9h3.2v3.2h-3.2zM370.9 30.9h3.2v3.2h-3.2zM350.9 40.9h3.2v3.2h-3.2zM385.9 40.9h3.2v3.2h-3.2zM375.9 45.9h3.2v3.2h-3.2zM335.9 85.9h3.2v3.2h-3.2zM330.9 105.9h3.2v3.2h-3.2zM385.9 105.9h3.2v3.2h-3.2zM400.9 105.9h3.2v3.2h-3.2zM360.9 125.9h3.2v3.2h-3.2zM380.9 155.9h3.2v3.2h-3.2zM325.9 160.9h3.2v3.2h-3.2zM380.9 160.9h3.2v3.2h-3.2zM380.9 165.9h3.2v3.2h-3.2zM335.9 170.9h3.2v3.2h-3.2zM380.9 170.9h3.2v3.2h-3.2zM395.9 170.9h3.2v3.2h-3.2zM395.9 175.9h3.2v3.2h-3.2zM390.9 215.9h3.2v3.2h-3.2zM395.9 215.9h3.2v3.2h-3.2zM400.9 220.9h3.2v3.2h-3.2zM335.9 230.9h3.2v3.2h-3.2zM395.9 230.9h3.2v3.2h-3.2zM325.9 235.9h3.2v3.2h-3.2zM365.9 235.9h3.2v3.2h-3.2zM370.9 235.9h3.2v3.2h-3.2zM375.9 240.9h3.2v3.2h-3.2zM390.9 240.9h3.2v3.2h-3.2zM395.9 240.9h3.2v3.2h-3.2zM400.9 240.9h3.2v3.2h-3.2zM360.9 245.9h3.2v3.2h-3.2zM360.9 250.9h3.2v3.2h-3.2zM370.9 250.9h3.2v3.2h-3.2zM365.9 255.9h3.2v3.2h-3.2zM370.9 255.9h3.2v3.2h-3.2zM360.9 260.9h3.2v3.2h-3.2zM365.9 260.9h3.2v3.2h-3.2zM345.9 265.9h3.2v3.2h-3.2zM355.9 265.9h3.2v3.2h-3.2zM365.9 265.9h3.2v3.2h-3.2zM330.9 305.9h3.2v3.2h-3.2z" fill="rgb(64,94,22)"/><path d="M405.9 5.9h3.2v3.2h-3.2zM405.9 35.9h3.2v3.2h-3.2zM405.9 40.9h3.2v3.2h-3.2z" fill="rgb(180,135,63)"/><path d="M400.9 10.9h3.2v3.2h-3.2zM395.9 15.9h3.2v3.2h-3.2zM330.9 20.9h3.2v3.2h-3.2zM375.9 25.9h3.2v3.2h-3.2zM330.9 30.9h3.2v3.2h-3.2zM375.9 35.9h3.2v3.2h-3.2zM370.9 65.9h3.2v3.2h-3.2zM355.9 90.9h3.2v3.2h-3.2zM330.9 95.9h3.2v3.2h-3.2zM335.9 95.9h3.2v3.2h-3.2zM395.9 110.9h3.2v3.2h-3.2zM375.9 115.9h3.2v3.2h-3.2zM330.9 170.9h3.2v3.2h-3.2zM330.9 175.9h3.2v3.2h-3.2zM335.9 175.9h3.2v3.2h-3.2zM375.9 175.9h3.2v3.2h-3.2zM380.9 175.9h3.2v3.2h-3.2zM340.9 185.9h3.2v3.2h-3.2zM400.9 185.9h3.2v3.2h-3.2zM340.9 190.9h3.2v3.2h-3.2zM370.9 190.9h3.2v3.2h-3.2zM380.9 190.9h3.2v3.2h-3.2zM390.9 195.9h3.2v3.2h-3.2zM355.9 225.9h3.2v3.2h-3.2zM360.9 225.9h3.2v3.2h-3.2zM395.9 225.9h3.2v3.2h-3.2zM370.9 245.9h3.2v3.2h-3.2zM375.9 245.9h3.2v3.2h-3.2zM375.9 255.9h3.2v3.2h-3.2zM350.9 265.9h3.2v3.2h-3.2zM335.9 270.9h3.2v3.2h-3.2zM345.9 280.9h3.2v3.2h-3.2zM395.9 285.9h3.2v3.2h-3.2zM400.9 295.9h3.2v3.2h-3.2zM395.9 305.9h3.2v3.2h-3.2z" fill="rgb(94,117,31)"/><path d="M405.9 15.9h3.2v3.2h-3.2zM405.9 30.9h3.2v3.2h-3.2z" fill="rgb(166,135,54)"/><path d="M380.9 20.9h3.2v3.2h-3.2zM325.9 25.9h3.2v3.2h-3.2zM370.9 35.9h3.2v3.2h-3.2zM335.9 40.9h3.2v3.2h-3.2zM370.9 40.9h3.2v3.2h-3.2zM375.9 50.9h3.2v3.2h-3.2zM345.9 55.9h3.2v3.2h-3.2zM355.9 55.9h3.2v3.2h-3.2zM360.9 65.9h3.2v3.2h-3.2zM355.9 85.9h3.2v3.2h-3.2zM330.9 100.9h3.2v3.2h-3.2zM335.9 100.9h3.2v3.2h-3.2zM325.9 140.9h3.2v3.2h-3.2zM325.9 150.9h3.2v3.2h-3.2zM325.9 155.9h3.2v3.2h-3.2zM335.9 165.9h3.2v3.2h-3.2zM375.9 180.9h3.2v3.2h-3.2zM395.9 180.9h3.2v3.2h-3.2zM390.9 225.9h3.2v3.2h-3.2zM400.9 225.9h3.2v3.2h-3.2zM330.9 230.9h3.2v3.2h-3.2zM325.9 250.9h3.2v3.2h-3.2zM325.9 260.9h3.2v3.2h-3.2zM360.9 265.9h3.2v3.2h-3.2zM400.9 285.9h3.2v3.2h-3.2z" fill="rgb(76,106,22)"/><path d="M355.9 30.9h3.2v3.2h-3.2zM330.9 35.9h3.2v3.2h-3.2zM355.9 40.9h3.2v3.2h-3.2zM365.9 40.9h3.2v3.2h-3.2zM325.9 45.9h3.2v3.2h-3.2zM345.9 50.9h3.2v3.2h-3.2zM360.9 50.9h3.2v3.2h-3.2zM350.9 55.9h3.2v3.2h-3.2zM375.9 55.9h3.2v3.2h-3.2zM370.9 60.9h3.2v3.2h-3.2zM360.9 70.9h3.2v3.2h-3.2zM360.9 75.9h3.2v3.2h-3.2zM360.9 95.9h3.2v3.2h-3.2zM395.9 105.9h3.2v3.2h-3.2zM380.9 110.9h3.2v3.2h-3.2zM380.9 115.9h3.2v3.2h-3.2zM340.9 140.9h3.2v3.2h-3.2zM325.9 145.9h3.2v3.2h-3.2zM330.9 145.9h3.2v3.2h-3.2zM335.9 145.9h3.2v3.2h-3.2zM360.9 145.9h3.2v3.2h-3.2zM330.9 155.9h3.2v3.2h-3.2zM325.9 180.9h3.2v3.2h-3.2zM380.9 180.9h3.2v3.2h-3.2zM370.9 185.9h3.2v3.2h-3.2zM355.9 190.9h3.2v3.2h-3.2zM395.9 190.9h3.2v3.2h-3.2zM395.9 195.9h3.2v3.2h-3.2zM395.9 200.9h3.2v3.2h-3.2zM385.9 210.9h3.2v3.2h-3.2zM380.9 230.9h3.2v3.2h-3.2zM380.9 235.9h3.2v3.2h-3.2zM365.9 240.9h3.2v3.2h-3.2zM365.9 250.9h3.2v3.2h-3.2zM345.9 255.9h3.2v3.2h-3.2zM345.9 260.9h3.2v3.2h-3.2zM325.9 265.9h3.2v3.2h-3.2zM350.9 270.9h3.2v3.2h-3.2zM375.9 270.9h3.2v3.2h-3.2zM395.9 295.9h3.2v3.2h-3.2zM395.9 300.9h3.2v3.2h-3.2z" fill="rgb(117,130,40)"/><path d="M405.9 45.9h3.2v3.2h-3.2zM405.9 55.9h3.2v3.2h-3.2zM405.9 85.9h3.2v3.2h-3.2zM405.9 150.9h3.2v3.2h-3.2zM405.9 160.9h3.2v3.2h-3.2zM405.9 165.9h3.2v3.2h-3.2zM405.9 290.9h3.2v3.2h-3.2zM405.9 305.9h3.2v3.2h-3.2z" fill="rgb(153,144,45)"/><path d="M405.9 50.9h3.2v3.2h-3.2zM405.9 65.9h3.2v3.2h-3.2zM405.9 105.9h3.2v3.2h-3.2zM405.9 190.9h3.2v3.2h-3.2zM405.9 195.9h3.2v3.2h-3.2zM405.9 210.9h3.2v3.2h-3.2zM405.9 240.9h3.2v3.2h-3.2zM405.9 280.9h3.2v3.2h-3.2z" fill="rgb(90,108,27)"/><path d="M405.9 60.9h3.2v3.2h-3.2zM405.9 70.9h3.2v3.2h-3.2zM405.9 90.9h3.2v3.2h-3.2zM405.9 120.9h3.2v3.2h-3.2zM405.9 125.9h3.2v3.2h-3.2zM405.9 155.9h3.2v3.2h-3.2zM405.9 170.9h3.2v3.2h-3.2zM405.9 220.9h3.2v3.2h-3.2zM405.9 225.9h3.2v3.2h-3.2zM405.9 230.9h3.2v3.2h-3.2zM405.9 235.9h3.2v3.2h-3.2zM405.9 300.9h3.2v3.2h-3.2z" fill="rgb(108,117,27)"/><path d="M405.9 185.9h3.2v3.2h-3.2zM405.9 200.9h3.2v3.2h-3.2zM405.9 205.9h3.2v3.2h-3.2zM405.9 215.9h3.2v3.2h-3.2zM405.9 275.9h3.2v3.2h-3.2zM405.9 285.9h3.2v3.2h-3.2zM405.9 295.9h3.2v3.2h-3.2z" fill="rgb(135,135,36)"/><rect x="340.8" y="0.8" width="28.4" height="28.4" fill="rgb(83,121,5)"/><rect x="330.8" y="0.8" width="8.4" height="8.4" fill="rgb(79,114,18)"/><rect x="330.8" y="10.8" width="8.4" height="8.4" fill="rgb(92,132,13)"/><rect x="385.8" y="0.8" width="8.4" height="8.4" fill="rgb(74,110,22)"/><rect x="395.8" y="0.8" width="8.4" height="8.4" fill="rgb(83,114,22)"/><rect x="385.8" y="10.8" width="8.4" height="8.4" fill="rgb(70,105,22)"/><rect x="385.8" y="20.8" width="8.4" height="8.4" fill="rgb(92,127,13)"/><rect x="335.8" y="30.8" width="8.4" height="8.4" fill="rgb(74,110,22)"/><rect x="345.8" y="30.8" width="8.4" height="8.4" fill="rgb(96,136,13)"/><rect x="360.8" y="30.8" width="8.4" height="8.4" fill="rgb(79,114,22)"/><rect x="380.8" y="30.8" width="8.4" height="8.4" fill="rgb(101,136,18)"/><rect x="395.8" y="30.8" width="8.4" height="8.4" fill="rgb(83,118,22)"/><rect x="320.8" y="35.8" width="8.4" height="8.4" fill="rgb(66,105,18)"/><rect x="340.8" y="40.8" width="8.4" height="8.4" fill="rgb(70,105,22)"/><rect x="330.8" y="45.8" width="8.4" height="8.4" fill="rgb(92,132,13)"/><rect x="350.8" y="45.8" width="8.4" height="8.4" fill="rgb(74,110,22)"/><rect x="380.8" y="45.8" width="23.4" height="23.4" fill="rgb(101,132,9)"/><rect x="300.8" y="55.8" width="33.4" height="33.4" fill="rgb(83,118,9)"/><rect x="335.8" y="60.8" width="23.4" height="23.4" fill="rgb(70,105,13)"/><rect x="365.8" y="70.8" width="33.4" height="33.4" fill="rgb(66,96,13)"/><rect x="340.8" y="85.8" width="13.4" height="13.4" fill="rgb(88,127,13)"/><rect x="400.8" y="75.8" width="8.4" height="8.4" fill="rgb(123,114,27)"/><rect x="400.8" y="95.8" width="8.4" height="8.4" fill="rgb(140,132,13)"/><rect x="340.8" y="100.8" width="13.4" height="13.4" fill="rgb(70,105,18)"/><rect x="355.8" y="105.8" width="8.4" height="8.4" fill="rgb(88,132,9)"/><rect x="370.8" y="105.8" width="8.4" height="8.4" fill="rgb(74,110,22)"/><rect x="400.8" y="110.8" width="8.4" height="8.4" fill="rgb(114,114,22)"/><rect x="325.8" y="115.8" width="23.4" height="23.4" fill="rgb(83,123,9)"/><rect x="350.8" y="115.8" width="8.4" height="8.4" fill="rgb(70,105,18)"/><rect x="365.8" y="115.8" width="8.4" height="8.4" fill="rgb(79,118,13)"/><rect x="385.8" y="120.8" width="8.4" height="8.4" fill="rgb(74,110,18)"/><rect x="395.8" y="120.8" width="8.4" height="8.4" fill="rgb(83,114,18)"/><rect x="350.8" y="125.8" width="8.4" height="8.4" fill="rgb(66,101,22)"/><rect x="350.8" y="135.8" width="8.4" height="8.4" fill="rgb(70,105,18)"/><rect x="365.8" y="130.8" width="23.4" height="23.4" fill="rgb(96,136,9)"/><rect x="390.8" y="130.8" width="18.4" height="18.4" fill="rgb(132,132,13)"/><rect x="340.8" y="145.8" width="18.4" height="18.4" fill="rgb(61,96,18)"/><rect x="390.8" y="150.8" width="13.4" height="13.4" fill="rgb(79,105,22)"/><rect x="360.8" y="155.8" width="18.4" height="18.4" fill="rgb(57,92,13)"/><rect x="315.8" y="165.8" width="13.4" height="13.4" fill="rgb(74,105,22)"/><rect x="340.8" y="165.8" width="18.4" height="18.4" fill="rgb(83,127,4)"/><rect x="385.8" y="165.8" width="8.4" height="8.4" fill="rgb(101,140,9)"/><rect x="360.8" y="175.8" width="8.4" height="8.4" fill="rgb(70,105,22)"/><rect x="385.8" y="175.8" width="8.4" height="8.4" fill="rgb(74,110,18)"/><rect x="400.8" y="175.8" width="8.4" height="8.4" fill="rgb(105,110,27)"/><rect x="325.8" y="185.8" width="13.4" height="13.4" fill="rgb(96,136,9)"/><rect x="345.8" y="185.8" width="8.4" height="8.4" fill="rgb(92,132,9)"/><rect x="360.8" y="185.8" width="8.4" height="8.4" fill="rgb(74,110,22)"/><rect x="385.8" y="185.8" width="8.4" height="8.4" fill="rgb(74,114,18)"/><rect x="350.8" y="195.8" width="28.4" height="28.4" fill="rgb(61,96,13)"/><rect x="320.8" y="200.8" width="28.4" height="28.4" fill="rgb(79,118,9)"/><rect x="395.8" y="205.8" width="8.4" height="8.4" fill="rgb(83,114,22)"/><rect x="380.8" y="220.8" width="8.4" height="8.4" fill="rgb(79,110,22)"/><rect x="370.8" y="225.8" width="8.4" height="8.4" fill="rgb(96,140,9)"/><rect x="350.8" y="230.8" width="8.4" height="8.4" fill="rgb(74,110,18)"/><rect x="385.8" y="230.8" width="8.4" height="8.4" fill="rgb(88,127,18)"/><rect x="330.8" y="235.8" width="18.4" height="18.4" fill="rgb(66,101,13)"/><rect x="350.8" y="240.8" width="8.4" height="8.4" fill="rgb(96,136,13)"/><rect x="380.8" y="245.8" width="28.4" height="28.4" fill="rgb(114,123,4)"/><rect x="330.8" y="255.8" width="13.4" height="13.4" fill="rgb(70,101,18)"/><rect x="350.8" y="255.8" width="8.4" height="8.4" fill="rgb(92,132,13)"/><rect x="370.8" y="260.8" width="8.4" height="8.4" fill="rgb(92,132,13)"/><rect x="325.8" y="270.8" width="8.4" height="8.4" fill="rgb(74,110,22)"/><rect x="340.8" y="270.8" width="8.4" height="8.4" fill="rgb(70,101,22)"/><rect x="350.8" y="275.8" width="43.4" height="43.4" fill="rgb(61,92,13)"/><rect x="395.8" y="275.8" width="8.4" height="8.4" fill="rgb(74,105,18)"/><rect x="320.8" y="280.8" width="23.4" height="23.4" fill="rgb(88,132,4)"/></svg>
<section class="box" style="left:655px;top:512px;width:540px;height:400px">
<div class="abs" style="left:180px;top:57px;width:180px;height:17px;background:#272f50;border-radius:4px;overflow:hidden"><div class="abs" style="left:0;top:0;width:86px;height:17px;background:#1aa92d"></div></div>
</section>
<div class="t" style="font-size:16.48px;line-height:21px;top:531.70px;color:#3d63da;letter-spacing:0.936px;left:550.97px;width:400px;text-align:center;"><span>Minimum fee</span></div>
<div class="t" style="font-size:16.48px;line-height:21px;top:531.70px;color:#3d63da;letter-spacing:0.697px;left:725.35px;width:400px;text-align:center;"><span>Memory Usage</span></div>
<div class="t" style="font-size:16.48px;line-height:21px;top:531.70px;color:#3d63da;letter-spacing:0.834px;left:899.72px;width:400px;text-align:center;"><span>Unconfirmed</span></div>
<span class="t" style="font-size:18.54px;line-height:23px;top:564.09px;color:#fff;letter-spacing:1.000px;left:709.40px;">0.10</span>
<span class="t" style="font-size:12.36px;line-height:16px;top:569.72px;color:#b9bcc8;letter-spacing:0.555px;left:754.80px;">sat/vB</span>
<div class="t" style="font-size:12.36px;line-height:16px;top:568.52px;color:#fff;letter-spacing:0.452px;left:725.23px;width:400px;text-align:center;"><span>143 MB / 300 MB</span></div>
<span class="t" style="font-size:18.54px;line-height:23px;top:564.09px;color:#fff;letter-spacing:1.049px;left:1054.50px;">23,431</span>
<span class="t" style="font-size:12.36px;line-height:16px;top:569.72px;color:#b9bcc8;letter-spacing:-0.057px;left:1123.80px;">TXs</span>
<div class="t" style="font-size:16.48px;line-height:21px;top:604.10px;color:#3d63da;letter-spacing:0.664px;left:725.33px;width:400px;text-align:center;"><span>Incoming Transactions</span></div>
<svg class="i" style="left:655px;top:630px" width="540" height="270" viewBox="655 630 540 270"><defs><linearGradient id="cg" gradientUnits="userSpaceOnUse" x1="0" y1="950" x2="0" y2="650"><stop offset="0" stop-color="#7CB342"/><stop offset="0.3001" stop-color="#7CB342"/><stop offset="0.3001" stop-color="#FDD835"/><stop offset="0.3633" stop-color="#FDD835"/><stop offset="0.3633" stop-color="#FFB300"/><stop offset="0.4583" stop-color="#FFB300"/><stop offset="0.4583" stop-color="#FB8C00"/><stop offset="0.5533" stop-color="#FB8C00"/><stop offset="0.5533" stop-color="#F4511E"/><stop offset="0.6483" stop-color="#F4511E"/><stop offset="0.6483" stop-color="#D81B60"/><stop offset="1" stop-color="#D81B60"/></linearGradient></defs><line x1="725.5" x2="1154" y1="656.0" y2="656.0" stroke="#474a58" stroke-width="1" stroke-dasharray="1 1.5"/><line x1="725.5" x2="1154" y1="670.0" y2="670.0" stroke="#474a58" stroke-width="1" stroke-dasharray="1 1.5"/><line x1="725.5" x2="1154" y1="727.0" y2="727.0" stroke="#474a58" stroke-width="1" stroke-dasharray="1 1.5"/><line x1="725.5" x2="1154" y1="784.0" y2="784.0" stroke="#474a58" stroke-width="1" stroke-dasharray="1 1.5"/><line x1="725.5" x2="1154" y1="841.0" y2="841.0" stroke="#474a58" stroke-width="1" stroke-dasharray="1 1.5"/><line x1="725.5" x2="1154" y1="898.0" y2="898.0" stroke="#474a58" stroke-width="1" stroke-dasharray="1 1.5"/><polyline fill="none" stroke="url(#cg)" stroke-width="3" stroke-linejoin="round" stroke-linecap="round" points="725.8,876.3 730.1,879.8 734.4,891.4 736.8,900 738,905 748.5,905 749.8,900 751.2,885.6 752.4,861 754.1,813.4 755.2,784.5 757.6,767.1 758.4,767.1 759.9,784.5 762.5,813.4 763.9,861 765.7,891.4 768.5,900 770,905 793,905 794.5,900 795.7,861 797.4,819.1 799.5,798.9 801.5,786.5 804.4,810.5 806.1,827.8 808.1,861 809,876.9 810.1,879.8 812.5,875.5 813.3,861 815.3,819.1 817.7,784.5 819.1,755.6 819.7,746.9 821.7,742.6 824,712.2 826.9,671.8 829.2,656.5 830.7,657.3 832.7,668.9 835,683.3 836.4,715.1 838.5,741.1 839.9,755.6 842.2,784.5 844.2,819.1 845.7,861 847.1,888.5 848,900 849,905 897.5,905 898.8,900 900.8,879.8 905.4,878.4 907.4,900 908,905 919.8,905 920.5,900 922.8,861 923.9,859.6 926.8,858.1 928.5,871.1 932,900 933,905 982.2,905 982.6,900 983.4,861 984.6,842.3 985.7,813.4 986.9,784.5 988.1,758.5 989.8,749.8 991.8,739.7 993.3,744 995.6,759.9 997,726.7 999,699.2 1001.4,718 1004.2,738.2 1007.1,757 1009.2,726.7 1011.5,683.3 1013.5,657.3 1014.9,660.2 1017.2,697.8 1018.7,755.6 1019.8,813.4 1021,842.3 1023.6,853.8 1024.5,842.3 1025.9,784.5 1027.4,726.7 1028.8,697.8 1030.8,668.9 1031.7,656.5 1033.1,674.7 1034.6,697.8 1036,755.6 1037.5,784.5 1038.3,813.4 1039.5,842.3 1041.8,861 1043.2,871.1 1046.1,891.4 1049.9,892.8 1051.3,900 1052,905 1092,905 1093,900 1095.9,878.4 1099.3,882.7 1102.8,900 1104,905 1143,905 1143.6,900 1145,861 1146.2,842.3 1147.6,784.5 1149,741.1 1150.2,706.5 1151.9,704.1 1153.7,702.7"/><line x1="726" x2="1154" y1="860.8" y2="860.8" stroke="#fff" stroke-width="2" stroke-dasharray="8 4"/></svg>
<span class="t" style="font-size:11.33px;line-height:14px;top:649.11px;color:#8c8f9c;letter-spacing:0.699px;right:561.10px;text-align:right;">5245</span>
<span class="t" style="font-size:11.33px;line-height:14px;top:663.08px;color:#8c8f9c;letter-spacing:0.699px;right:561.10px;text-align:right;">5000</span>
<span class="t" style="font-size:11.33px;line-height:14px;top:720.08px;color:#8c8f9c;letter-spacing:0.699px;right:561.10px;text-align:right;">4000</span>
<span class="t" style="font-size:11.33px;line-height:14px;top:777.08px;color:#8c8f9c;letter-spacing:0.699px;right:561.10px;text-align:right;">3000</span>
<span class="t" style="font-size:11.33px;line-height:14px;top:834.08px;color:#8c8f9c;letter-spacing:0.699px;right:561.10px;text-align:right;">2000</span>
<span class="t" style="font-size:11.33px;line-height:14px;top:891.08px;color:#8c8f9c;letter-spacing:0.699px;right:561.10px;text-align:right;">1000</span>
</body></html>
